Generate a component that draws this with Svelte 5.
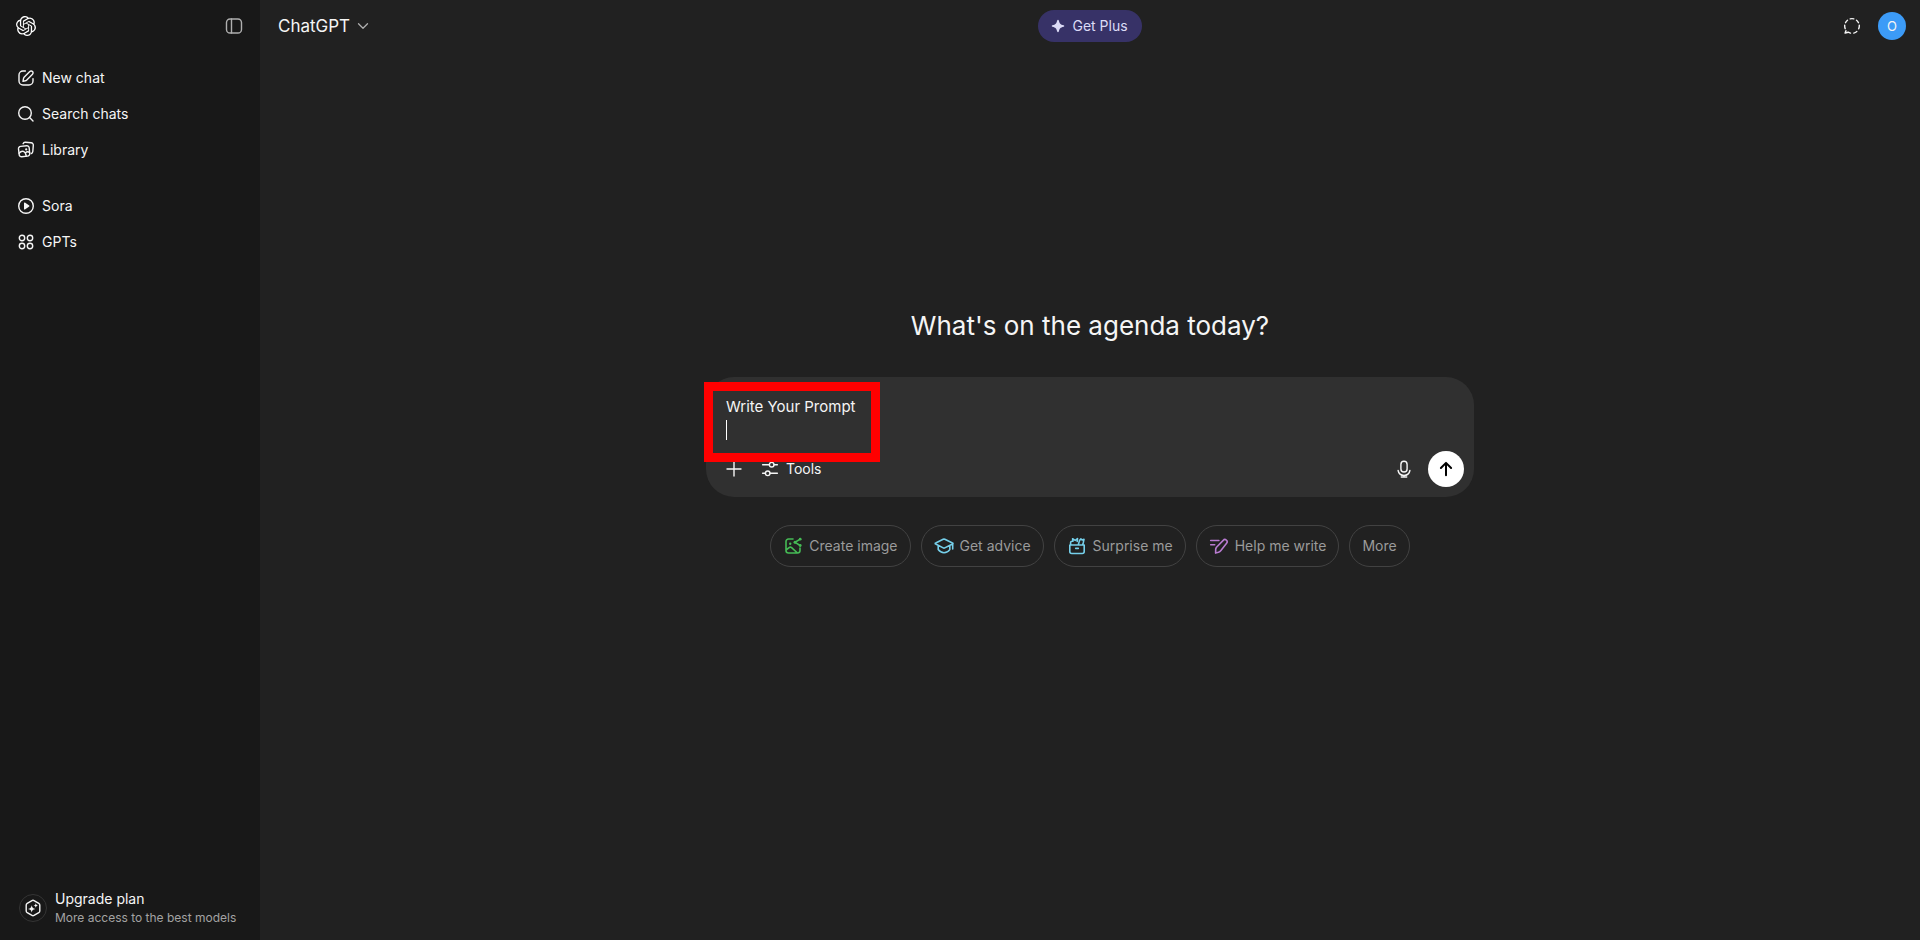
<script>
  let prompt = $state('Write Your Prompt\n');

  const mainLinks = [
    { label: 'New chat', icon: 'edit' },
    { label: 'Search chats', icon: 'search' },
    { label: 'Library', icon: 'library' }
  ];

  const appLinks = [
    { label: 'Sora', icon: 'play' },
    { label: 'GPTs', icon: 'grid' }
  ];

  const suggestions = [
    { label: 'Create image', icon: 'image', color: 'green' },
    { label: 'Get advice', icon: 'cap', color: 'cyan' },
    { label: 'Surprise me', icon: 'gift', color: 'cyan' },
    { label: 'Help me write', icon: 'pen', color: 'purple' },
    { label: 'More' }
  ];
</script>

{#snippet icon(name)}
  <svg class="icon" viewBox="0 0 20 20" aria-hidden="true">
    {#if name === 'edit'}
      <path d="M9.4 3H7a4 4 0 0 0-4 4v6a4 4 0 0 0 4 4h6a4 4 0 0 0 4-4v-2.4" />
      <path d="M8.1 9.2 13.8 3.5a1.9 1.9 0 0 1 2.7 2.7l-5.7 5.7a3.5 3.5 0 0 1-1.6.9l-2.2.5.4-2.3c.1-.7.3-1.3.7-1.8Z" />
    {:else if name === 'search'}
      <circle cx="9" cy="9" r="6.3" />
      <path d="m13.6 13.6 3.4 3.4" />
    {:else if name === 'library'}
      <path d="M4.6 6.4 10.7 5.8a2.3 2.3 0 0 1 2.5 2.1l.5 5.7a2.3 2.3 0 0 1-2.1 2.5l-5.9.6a2.3 2.3 0 0 1-2.500-2.100L2.500 8.900a2.300 2.300 0 0 1 2.100-2.500Z" />
      <path d="M3.100 13.200c3-3.400 6.200-2.200 7.200 2.900M9.400 12.900c1.300-1.300 2.800-1.300 4.200-.4" />
      <path d="M7.100 3.700c.4-1 1.300-1.500 2.300-1.400l5.800.5a2.300 2.300 0 0 1 2.100 2.500l-.5 6.200c-.1 1-.6 1.700-1.500 2" />
      <circle class="solid" cx="10.200" cy="9.400" r="1.100" />
    {:else if name === 'play'}
      <circle cx="10" cy="10" r="7.3" />
      <path class="solid" d="M8 7.100c0-.5.500-.7.900-.5l4.300 2.800c.4.300.4.900 0 1.200l-4.300 2.800c-.4.200-.9 0-.9-.5Z" />
    {:else if name === 'grid'}
      <circle cx="6" cy="6" r="2.7" />
      <circle cx="14" cy="6" r="2.7" />
      <circle cx="6" cy="14" r="2.7" />
      <circle cx="14" cy="14" r="2.7" />
    {:else if name === 'panel'}
      <rect x="2.5" y="3" width="15" height="14" rx="3.6" />
      <path d="M7.5 3v14" />
    {:else if name === 'chevron'}
      <path d="m5 7.500 5 5 5-5" />
    {:else if name === 'spark'}
      <path class="solid" d="M10 2.200c.5 0 .8.300 1 .8 1.100 4.100 1.900 4.900 6 6 .5.200.8.500.8 1s-.3.800-.8 1c-4.100 1.100-4.900 1.900-6 6-.2.500-.5.800-1 .8s-.8-.3-1-.8c-1.100-4.100-1.900-4.900-6-6-.5-.2-.8-.5-.8-1s.3-.8.800-1c4.100-1.100 4.900-1.900 6-6 .2-.5.500-.8 1-.8Z" />
    {:else if name === 'temporary'}
      <path d="M8.2 2.9a7.3 7.3 0 0 1 3.6 0M14.5 4.2a7.3 7.3 0 0 1 2 2.5M17.3 9.3a7.3 7.3 0 0 1-.6 3.5M14.8 15.5a7.3 7.3 0 0 1-3 1.6M5.5 4.2a7.3 7.3 0 0 0-2 2.5M2.7 9.3a7.3 7.3 0 0 0 .5 3.4M8.5 17.1c-1-.2-1.7-.5-2.3-.9l-3.1.8.8-2.3" />
    {:else if name === 'upgrade'}
      <path d="M9 2.600a2 2 0 0 1 2 0l4.800 2.700a2 2 0 0 1 1 1.700v6a2 2 0 0 1-1 1.700L11 17.400a2 2 0 0 1-2 0l-4.800-2.700a2 2 0 0 1-1-1.700V7a2 2 0 0 1 1-1.700Z" />
      <path class="solid" d="M8.700 7.200c.6 2.600 1.100 3.100 3.700 3.700-2.600.6-3.100 1.100-3.700 3.700-.6-2.600-1.100-3.100-3.700-3.700 2.600-.6 3.100-1.100 3.700-3.700ZM12.800 5.200c.4 1.600.7 1.900 2.300 2.300-1.600.4-1.900.7-2.300 2.300-.4-1.600-.7-1.900-2.300-2.300 1.600-.4 1.900-.7 2.300-2.300Z" />
    {:else if name === 'plus'}
      <path d="M10 3v14M3 10h14" />
    {:else if name === 'sliders'}
      <path d="M2.600 5.700h6.700M14.100 5.700h3.300M2.600 14.300h2.700M10.100 14.300h7.300" />
      <circle cx="11.7" cy="5.7" r="2.3" />
      <circle cx="7.7" cy="14.3" r="2.3" />
    {:else if name === 'mic'}
      <rect x="6.9" y="2.3" width="6.2" height="10.7" rx="3.1" />
      <path d="M4.100 11.500a6 6 0 0 0 11.800 0M10 16.500V18M7.300 18h5.400" />
    {:else if name === 'arrow'}
      <path d="M10 16.200V4M4.900 9 10 3.900 15.100 9" />
    {:else if name === 'image'}
      <path d="M10 3H5.500A2.500 2.500 0 0 0 3 5.500v9A2.500 2.500 0 0 0 5.500 17h9a2.500 2.500 0 0 0 2.500-2.500V12M3 14l3.100-2.400a2 2 0 0 1 2.500 0L14.500 17" />
      <circle class="solid" cx="7.2" cy="7.7" r="1.2" />
      <path d="M17.300 3.100 12 6.300l5.300 3.300" />
      <circle class="solid" cx="17.2" cy="3.2" r="1.4" />
      <circle class="solid" cx="12" cy="6.3" r="1.5" />
      <circle class="solid" cx="17.2" cy="9.5" r="1.4" />
    {:else if name === 'cap'}
      <path d="M9.200 3.300 1.700 7a.5.500 0 0 0 0 1l7.500 3.900c.5.300 1.100.3 1.600 0L18.500 8a.5.500 0 0 0 0-1l-7.700-3.700a1.900 1.900 0 0 0-1.600 0ZM4.200 9.600v4c1.500 2 3.500 3.100 5.800 3.100s4.400-1.100 5.800-3.100v-4M18.700 7.600v5.400" />
    {:else if name === 'gift'}
      <path d="M2.800 9h14.400v6.500a2 2 0 0 1-2 2H4.800a2 2 0 0 1-2-2ZM8.700 12.400h2.600M3.600 9V6.600c0-.9.600-1.400 1.400-1.400h1L5.600 2.800l2.600 1.600 2.300-1.800-.3 2.900M11.300 8.800l1.200-4.200 1.300-1.700 1.500 1.100 1.700-.7-.6 2.900-.7 2.500" />
    {:else if name === 'pen'}
      <path d="M1.700 4.500h8.200M1.700 8.700h4M7.500 11.200l6.700-6.800a2.200 2.200 0 0 1 3.400 2.800l-5.700 7.200a6 6 0 0 1-2.500 1.900l-2.800.8.100-3.100a4 4 0 0 1 .8-2.800Z" />
    {/if}
  </svg>
{/snippet}

<div class="app">
  <aside class="sidebar">
    <div class="sidebar-top">
      <a class="logo" href="#home" aria-label="Home">
        <svg viewBox="0 0 24 24" aria-hidden="true">
          <path d="M22.2819 9.8211a5.9847 5.9847 0 0 0-.5157-4.9108 6.0462 6.0462 0 0 0-6.5098-2.9A6.0651 6.0651 0 0 0 4.9807 4.1818a5.9847 5.9847 0 0 0-3.9977 2.9 6.0462 6.0462 0 0 0 .7427 7.0966 5.98 5.98 0 0 0 .511 4.9107 6.051 6.051 0 0 0 6.5146 2.9001A5.9847 5.9847 0 0 0 13.2599 24a6.0557 6.0557 0 0 0 5.7718-4.2058 5.9894 5.9894 0 0 0 3.9977-2.9001 6.0557 6.0557 0 0 0-.7475-7.0729zm-9.022 12.6081a4.4755 4.4755 0 0 1-2.8764-1.0408l.1419-.0804 4.7783-2.7582a.7948.7948 0 0 0 .3927-.6813v-6.7369l2.02 1.1686a.071.071 0 0 1 .038.052v5.5826a4.504 4.504 0 0 1-4.4945 4.4944zm-9.6607-4.1254a4.4708 4.4708 0 0 1-.5346-3.0137l.142.0852 4.783 2.7582a.7712.7712 0 0 0 .7806 0l5.8428-3.3685v2.3324a.0804.0804 0 0 1-.0332.0615L9.74 19.9502a4.4992 4.4992 0 0 1-6.1408-1.6464zM2.3408 7.8956a4.485 4.485 0 0 1 2.3655-1.9728V11.6a.7664.7664 0 0 0 .3879.6765l5.8144 3.3543-2.0201 1.1685a.0757.0757 0 0 1-.071 0l-4.8303-2.7865A4.504 4.504 0 0 1 2.3408 7.872zm16.5963 3.8558L13.1038 8.364 15.1192 7.2a.0757.0757 0 0 1 .071 0l4.8303 2.7913a4.4944 4.4944 0 0 1-.6765 8.1042v-5.6772a.79.79 0 0 0-.407-.667zm2.0107-3.0231l-.142-.0852-4.7735-2.7818a.7759.7759 0 0 0-.7854 0L9.409 9.2297V6.8974a.0662.0662 0 0 1 .0284-.0615l4.8303-2.7866a4.4992 4.4992 0 0 1 6.6802 4.66zM8.3065 12.863l-2.02-1.1638a.0804.0804 0 0 1-.038-.0567V6.0742a4.4992 4.4992 0 0 1 7.3757-3.4537l-.142.0805L8.704 5.459a.7948.7948 0 0 0-.3927.6813zm1.0976-2.3654l2.602-1.4998 2.6069 1.4998v2.9994l-2.5974 1.4997-2.6067-1.4997Z" />
        </svg>
      </a>
      <button class="panel-toggle" aria-label="Close sidebar">{@render icon('panel')}</button>
    </div>

    <nav>
      <div class="nav-group">
        {#each mainLinks as link}
          <a class="nav-item" href="#{link.icon}">{@render icon(link.icon)}<span>{link.label}</span></a>
        {/each}
      </div>
      <div class="nav-group">
        {#each appLinks as link}
          <a class="nav-item" href="#{link.icon}">{@render icon(link.icon)}<span>{link.label}</span></a>
        {/each}
      </div>
    </nav>

    <button class="upgrade">
      <span class="upgrade-icon">{@render icon('upgrade')}</span>
      <span class="upgrade-text">
        <span class="upgrade-title">Upgrade plan</span>
        <span class="upgrade-note">More access to the best models</span>
      </span>
    </button>
  </aside>

  <main>
    <header>
      <div class="header-side">
        <button class="model">ChatGPT {@render icon('chevron')}</button>
      </div>
      <button class="get-plus">{@render icon('spark')}Get Plus</button>
      <div class="header-side header-right">
        <button class="temporary" aria-label="Temporary chat">{@render icon('temporary')}</button>
        <button class="avatar" aria-label="Account">O</button>
      </div>
    </header>

    <section class="content">
      <h1>What's on the agenda today?</h1>

      <form class="composer" onsubmit={(e) => e.preventDefault()}>
        <textarea rows="2" aria-label="Prompt" bind:value={prompt}></textarea>
        <div class="composer-bar">
          <button type="button" class="tool add" aria-label="Add files">{@render icon('plus')}</button>
          <button type="button" class="tool tools">{@render icon('sliders')}Tools</button>
          <button type="button" class="tool mic" aria-label="Dictate">{@render icon('mic')}</button>
          <button type="submit" class="send" aria-label="Send">{@render icon('arrow')}</button>
        </div>
        <div class="caret"></div>
        <div class="highlight"></div>
      </form>

      <div class="suggestions">
        {#each suggestions as item}
          <button class="chip {item.color ?? ''}">
            {#if item.icon}{@render icon(item.icon)}{/if}
            {item.label}
          </button>
        {/each}
      </div>
    </section>
  </main>
</div>

<style>
  :global(body) {
    margin: 0;
    background: #212121;
  }

  .app {
    display: flex;
    min-height: 100vh;
    font-family: Inter, 'Liberation Sans', sans-serif;
    font-size: 14px;
    line-height: 20px;
    color: #f5f5f5;
  }

  button {
    font: inherit;
    color: inherit;
    background: none;
    border: 0;
    padding: 0;
    display: flex;
    align-items: center;
    cursor: pointer;
  }

  a {
    color: inherit;
    text-decoration: none;
  }

  .icon {
    width: 20px;
    height: 20px;
    flex-shrink: 0;
    fill: none;
    stroke: currentColor;
    stroke-width: 1.4;
    stroke-linecap: round;
    stroke-linejoin: round;
  }

  .icon .solid {
    fill: currentColor;
    stroke: none;
  }

  .sidebar {
    width: 260px;
    flex-shrink: 0;
    box-sizing: border-box;
    display: flex;
    flex-direction: column;
    background: #181818;
  }

  .sidebar-top {
    display: flex;
    align-items: center;
    justify-content: space-between;
    height: 52px;
    padding: 0 16px;
    margin-bottom: 8px;
  }

  .logo svg {
    display: block;
    width: 20px;
    height: 20px;
    fill: #ffffff;
  }

  .panel-toggle {
    color: #afafaf;
  }

  .nav-group {
    margin-bottom: 20px;
  }

  .nav-item {
    display: flex;
    align-items: center;
    gap: 6px;
    height: 36px;
    padding: 0 16px;
  }

  .upgrade {
    margin-top: auto;
    padding: 12px 19px 13px;
    gap: 8px;
    text-align: left;
  }

  .upgrade-icon {
    display: flex;
    align-items: center;
    justify-content: center;
    width: 28px;
    height: 28px;
    box-sizing: border-box;
    border: 1px solid #343434;
    border-radius: 50%;
  }

  .upgrade-text {
    display: flex;
    flex-direction: column;
  }

  .upgrade-note {
    font-size: 12px;
    line-height: 18px;
    color: #a3a3a3;
  }

  main {
    flex: 1;
    display: flex;
    flex-direction: column;
    min-width: 0;
  }

  header {
    display: flex;
    align-items: center;
    height: 52px;
    padding: 0 14px;
  }

  .header-side {
    flex: 1;
    display: flex;
    align-items: center;
  }

  .header-right {
    justify-content: flex-end;
    gap: 16px;
  }

  .model {
    padding-left: 4px;
    font-size: 17px;
    line-height: 28px;
    gap: 4px;
  }

  .model .icon {
    width: 18px;
    height: 18px;
    color: #afafaf;
  }

  .get-plus {
    height: 32px;
    padding: 0 14px 0 12px;
    gap: 6px;
    border-radius: 16px;
    background: #373267;
    color: #dcdbf6;
  }

  .get-plus .icon {
    width: 16px;
    height: 16px;
  }

  .avatar {
    justify-content: center;
    width: 28px;
    height: 28px;
    border-radius: 50%;
    background: #3c9bf7;
    font-size: 13px;
  }

  .content {
    flex: 1;
    display: flex;
    flex-direction: column;
    align-items: center;
    padding: 0 16px;
  }

  .content::before {
    content: '';
    flex: 11;
  }

  .content::after {
    content: '';
    flex: 16;
  }

  h1 {
    margin: 0 0 34px;
    font-size: 26px;
    line-height: 34px;
    font-weight: 400;
  }

  .composer {
    position: relative;
    width: 100%;
    max-width: 768px;
    box-sizing: border-box;
    padding: 18px 10px 10px;
    border-radius: 28px;
    background: #303030;
  }

  textarea {
    display: block;
    width: 100%;
    box-sizing: border-box;
    padding: 0 10px;
    margin-bottom: 8px;
    border: 0;
    outline: 0;
    resize: none;
    overflow: hidden;
    background: none;
    color: #f5f5f5;
    font: 15px/24px Inter, 'Liberation Sans', sans-serif;
  }

  .composer-bar {
    display: flex;
    align-items: center;
  }

  .tool {
    height: 36px;
    padding: 0 8px;
  }

  .tools {
    gap: 6px;
  }

  .mic {
    margin-left: auto;
  }

  .send {
    justify-content: center;
    width: 36px;
    height: 36px;
    margin-left: 6px;
    border-radius: 50%;
    background: #ffffff;
    color: #000000;
  }

  .send .icon {
    stroke-width: 2;
  }

  .caret {
    position: absolute;
    top: 43px;
    left: 20px;
    width: 1px;
    height: 20px;
    background: #ffffff;
  }

  /* red frame around the prompt text */
  .highlight {
    position: absolute;
    top: 5px;
    left: -2px;
    width: 176px;
    height: 80px;
    box-sizing: border-box;
    border: 9px solid #ff0000;
    pointer-events: none;
  }

  .suggestions {
    display: flex;
    flex-wrap: wrap;
    justify-content: center;
    gap: 10px;
    margin-top: 28px;
  }

  .chip {
    height: 42px;
    padding: 0 12px;
    gap: 6px;
    border: 1px solid #424242;
    border-radius: 21px;
    color: #9b9b9b;
  }

  .chip .icon {
    stroke-width: 1.6;
  }

  .green .icon {
    color: #45bb55;
  }

  .cyan .icon {
    color: #76d0eb;
  }

  .purple .icon {
    color: #b87bd0;
  }
</style>
